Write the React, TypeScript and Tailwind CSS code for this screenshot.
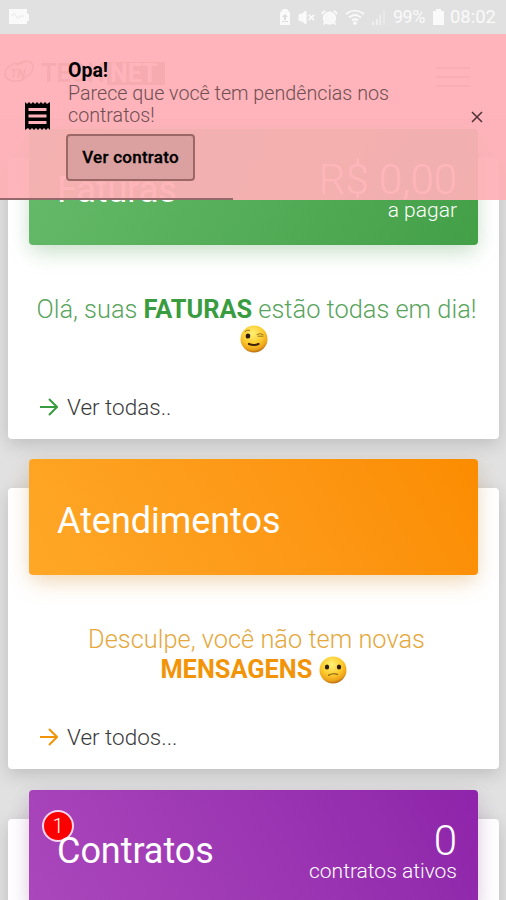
import { AlarmClock, VolumeX } from "lucide-react"
import type { ReactNode } from "react"

function StatusBar() {
  return (
    <div className="flex h-[34px] items-center justify-between bg-[#e1e1e1] pl-2 pr-[10px] text-[#fafafa]">
      <svg width="22" height="18" viewBox="0 0 22 18">
        <path d="M1 1h18v5h2v7h-2v3H1z" fill="#fafafa" />
        <path d="M4 8c1-3 3-3 4 0s3 3 4 0h4" stroke="#e6e6e6" fill="none" />
      </svg>
      <div className="flex items-center">
        <svg width="12" height="18" viewBox="0 0 12 18" className="mr-[7px]">
          <path d="M1 5l3-4h4l3 4v12H1z" fill="#fafafa" />
          <path d="M6 6l3 3H7v3H5V9H3zM3 13h6v1H3z" fill="#dcdcdc" />
        </svg>
        <VolumeX className="mr-[6px] h-[17px] w-[17px]" fill="#fafafa" strokeWidth={2.4} />
        <AlarmClock className="mr-[7px] h-[17px] w-[17px]" fill="#f7f7f7" strokeWidth={2.6} />
        <svg width="20" height="16" viewBox="0 0 20 16" className="mr-[7px]" fill="none" stroke="#fafafa" strokeWidth="1.7">
          <path d="M1 5Q10-2 19 5M4 8.500Q10 3.500 16 8.500M7 11.500Q10 9 13 11.500" />
          <circle cx="10" cy="14" r="1" />
        </svg>
        <svg width="14" height="16" viewBox="0 0 14 16" className="mr-[7px]" fill="#f0f0f0">
          <path d="M0 13h2v3H0zM4 10h2v6H4zM7.500 6H9v10H7.500zM11.500 1h1v15h-1z" />
        </svg>
        <span className="w-[34px] whitespace-nowrap text-[18px] leading-none tracking-[-0.5px]">99%</span>
        <svg width="11" height="18" viewBox="0 0 11 18" className="ml-[6px] mr-[6px]" fill="#fafafa">
          <path d="M3 1h5v2h3v14H0V3h3z" />
        </svg>
        <span className="whitespace-nowrap text-[18.500px] leading-none">08:02</span>
      </div>
    </div>
  )
}

function Navbar() {
  return (
    <div className="flex h-[86px] items-center justify-between border-b border-[#ccc] bg-[#f0f0f0] pl-[3px] pr-9">
      <div className="-mt-[6px] flex items-center gap-1 text-[#81656a]">
        <svg width="34" height="28" viewBox="0 0 34 28" fill="none" stroke="currentColor">
          <path d="M20 4C9 1 1 9 2 15s13 9 20 3M14 5c8-6 17-4 16 3s-5 8-11 10" strokeWidth="1.600" />
          <text x="7" y="18" fontSize="12" fontStyle="italic" fontWeight="700" fill="currentColor" stroke="none">TN</text>
        </svg>
        <div className="flex items-center text-[25px] font-bold leading-[23px]">
          <span className="w-[66px]">TECH</span>
          <span className="h-[23px] w-[58px] bg-[#81656a] pl-[3px] text-[#f0f0f0]">NET</span>
        </div>
      </div>
      <div className="flex w-[34px] flex-col gap-[7px]">
        <div className="h-[2px] bg-[#999]" />
        <div className="h-[2px] bg-[#999]" />
        <div className="h-[2px] bg-[#999]" />
      </div>
    </div>
  )
}

function WinkFace() {
  return (
    <svg className="relative -top-[1px] inline-block" width="28" height="28" viewBox="0 0 28 28">
      <circle cx="14" cy="14" r="13.500" fill="url(#face)" />
      <ellipse cx="8" cy="11" rx="2.300" ry="2.600" fill="#2e1c0b" />
      <path d="M5 6.500q2-2 4.500-1.200M17 9.500q3-2 6 0M18 11.200h5" stroke="#9b7422" fill="none" strokeLinecap="round" />
      <path d="M9 19q5 2 9.500 0" stroke="#3f2307" fill="none" strokeWidth="2.200" strokeLinecap="round" />
    </svg>
  )
}

function SadFace() {
  return (
    <svg className="relative -top-[1px] inline-block" width="28" height="28" viewBox="0 0 28 28">
      <circle cx="14" cy="14" r="13.500" fill="url(#face)" />
      <ellipse cx="8" cy="11" rx="2.200" ry="2.500" fill="#2e1c0b" />
      <ellipse cx="20" cy="11" rx="2.200" ry="2.500" fill="#2e1c0b" />
      <path d="M9.500 19.300q4-2.500 9-1" stroke="#795018" fill="none" strokeWidth="1.200" strokeLinecap="round" />
    </svg>
  )
}

function Arrow() {
  return (
    <svg width="18" height="18" viewBox="0 0 18 18" fill="none" stroke="currentColor" strokeWidth="2">
      <path d="M0 9h16.500M9 1l8 8-8 8" />
    </svg>
  )
}

type CardProps = {
  title: string
  value?: string
  caption?: string
  badge?: string
  banner: string
  accent: string
  strong: string
  link?: string
  children?: ReactNode
}

function Card({ title, value, caption, badge, banner, accent, strong, link, children }: CardProps) {
  return (
    <div className="h-[281px] shrink-0 rounded-[4px] bg-white px-[21px] shadow-[0_5px_18px_rgba(0,0,0,0.16)]">
      <div className={`relative -top-[29px] flex h-[116px] items-center justify-between rounded-[4px] pl-7 pr-[21px] text-white ${banner}`}>
        {badge && (
          <span className="absolute left-[13px] top-[20px] flex h-8 w-8 items-center justify-center rounded-full border-2 border-[#f5d5ee] bg-[#fb0000] text-[20px] font-light">
            {badge}
          </span>
        )}
        <h2 className="relative pt-[7px] text-[36px] leading-[42px] tracking-[-0.05px]">{title}</h2>
        <div className="pt-[8px] text-right font-light">
          <div className="text-[42px] leading-[38px]">{value}</div>
          <div className="text-[21px] leading-[22px]">{caption}</div>
        </div>
      </div>
      <div className={`flex h-[147px] flex-col justify-between ${accent}`}>
        <p className="mt-[21px] whitespace-nowrap text-center text-[25.400px] font-light leading-[29.500px]">{children}</p>
        <div className={`flex items-center gap-[9px] pl-[11px] ${strong}`}>
          <Arrow />
          <span className="text-[22.500px] font-light leading-[28px] text-[#3a3a3a]">{link}</span>
        </div>
      </div>
    </div>
  )
}

function Toast() {
  return (
    <div className="absolute left-0 top-[34px] flex h-[166px] w-full bg-[#ffb0b6]/93 pl-[25px] text-black">
      <svg width="25" height="28" viewBox="0 0 25 28" className="mt-[68px] shrink-0">
        <path d="M0 2V0l2 2 2-2 2 2 2-2 2 2 2-2 2 2 2-2 2 2 2-2 2 2 3-2v28l-2-2-2 2-2-2-2 2-2-2-2 2-2-2-2 2-2-2-2 2-2-2-3 2z" />
        <path d="M3.500 6h18v3h-18zM3.500 12.500h18v3h-18zM3.500 19h18v3h-18z" fill="#ffb3b8" />
      </svg>
      <div className="ml-[18px] pt-[25px]">
        <div className="text-[19.500px] font-bold leading-[23px]">Opa!</div>
        <p className="whitespace-nowrap pt-[1px] text-[19.700px] font-light leading-[22px] text-[#704e52]">
          Parece que você tem pendências nos<br />contratos!
        </p>
        <button className="-ml-[2px] mt-[7px] h-[47px] w-[129px] whitespace-nowrap rounded-[4px] border-2 border-[#9b6767] bg-[#dba1a0] text-[17px] font-medium tracking-[0.25px] [-webkit-text-stroke:0.3px_black]">
          Ver contrato
        </button>
      </div>
      <svg className="absolute right-[23px] top-[77px]" width="12" height="12" viewBox="0 0 12 12" stroke="#4e3035" strokeWidth="1.500">
        <path d="M1 1l10 10M11 1L1 11" />
      </svg>
      <div className="absolute bottom-0 left-0 h-[2px] w-[233px] bg-[#94696c]" />
    </div>
  )
}

export default function App() {
  return (
    <div className="relative h-[900px] w-full overflow-hidden bg-[#e1e1e1] font-[Roboto,sans-serif]">
      <svg className="absolute h-0 w-0">
        <defs>
          <radialGradient id="face" cx="45%" cy="30%" r="70%">
            <stop offset="0" stopColor="#fff176" />
            <stop offset="0.55" stopColor="#fdcb2e" />
            <stop offset="0.85" stopColor="#eda319" />
            <stop offset="1" stopColor="#b56c12" />
          </radialGradient>
        </defs>
      </svg>
      <StatusBar />
      <Navbar />
      <main className="flex flex-col gap-[49.500px] pl-2 pr-[7px] pt-[37.500px]">
        <Card
          title="Faturas"
          value="R$ 0,00"
          caption="a pagar"
          banner="bg-linear-120 from-[#66bb6a] to-[#43a047] shadow-[0_10px_22px_-4px_rgba(76,175,80,0.25),0_4px_20px_rgba(0,0,0,0.08)]"
          accent="text-[#58a45c]"
          strong="text-[#3a9c40]"
          link="Ver todas.."
        >
          <span className="pl-[6px]">
            Olá, suas <b className="font-bold text-[#3a9c40]">FATURAS</b> estão todas em dia!
          </span>
          <br />
          <WinkFace />
        </Card>
        <Card
          title="Atendimentos"
          banner="bg-linear-60 from-[#ffa726] to-[#fb8c00] shadow-[0_10px_22px_-4px_rgba(255,152,0,0.25),0_4px_20px_rgba(0,0,0,0.08)]"
          accent="text-[#e5a83c]"
          strong="text-[#f29408]"
          link="Ver todos..."
        >
          <span className="pl-[6px]">Desculpe, você não tem novas</span>
          <br />
          <b className="font-bold text-[#f29408]">MENSAGENS</b> <SadFace />
        </Card>
        <Card
          title="Contratos"
          value="0"
          caption="contratos ativos"
          badge="1"
          banner="bg-linear-60 from-[#ab47bc] to-[#8e24aa] shadow-[0_10px_22px_-4px_rgba(156,39,176,0.25),0_4px_20px_rgba(0,0,0,0.08)]"
          accent="text-[#8e24aa]"
          strong="text-[#8e24aa]"
        />
      </main>
      <Toast />
    </div>
  )
}
